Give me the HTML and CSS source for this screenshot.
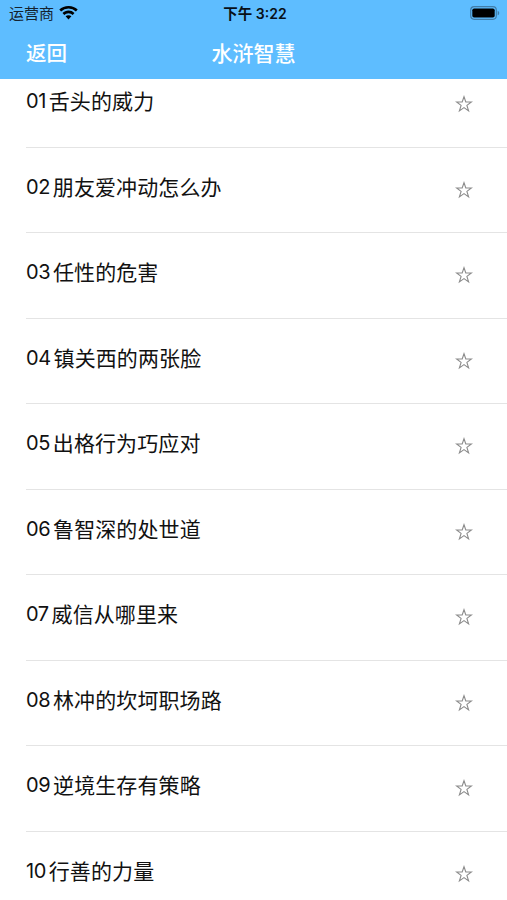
FILE: index.html
```html
<!DOCTYPE html>
<html lang="zh-CN">
<head>
<meta charset="utf-8">
<title>水浒智慧</title>
<link rel="stylesheet" href="styles.css">
</head>
<body>
<svg class="defs" width="0" height="0"><symbol id="star" viewBox="0 0 18 18"><path d="M9 1.700 10.800 7H16.400L11.900 10.400 13.600 15.900 9 12.600 4.400 15.900 6.100 10.400 1.600 7H7.200Z" fill="none" stroke="#8b8b8b" stroke-width="1.100"/></symbol></svg>
<header class="header">
  <div class="status">
    <div class="carrier"><span>运营商</span>
      <svg class="wifi" width="19" height="14" viewBox="0 0 19 14"><path d="M9.500 0C5.900 0 2.700 1.300.3 3.600l1.800 1.900a10.600 10.600 0 0 1 14.800 0l1.800-1.900A13.200 13.200 0 0 0 9.500 0zM9.500 4.600c-2.300 0-4.400.9-6 2.400l1.800 1.900a6 6 0 0 1 8.400 0L15.500 7a8.600 8.600 0 0 0-6-2.400zM9.500 9.200c-1.100 0-2.100.4-2.900 1.100l2.900 3.200 2.900-3.200a4.200 4.200 0 0 0-2.900-1.100z"/></svg>
    </div>
    <div class="time"><span class="period">下午</span> 3:22</div>
    <svg class="battery" width="31" height="14" viewBox="0 0 31 14"><rect x=".7" y=".7" width="25.600" height="12.600" rx="3.500" fill="none" stroke="#417da9" stroke-width="1.200"/><rect x="2.300" y="2.400" width="22.400" height="9.200" rx="1.800"/><path d="M27.700 4.700v4.600c2-.8 2-3.800 0-4.600z" fill="#417da9"/></svg>
  </div>
  <nav class="nav"><span class="back">返回</span><h1 class="title">水浒智慧</h1></nav>
</header>
<ul class="list">
  <li class="row"><span class="num">01</span><span class="name">舌头的威力</span><svg class="star"><use href="#star"/></svg></li>
  <li class="row"><span class="num">02</span><span class="name">朋友爱冲动怎么办</span><svg class="star"><use href="#star"/></svg></li>
  <li class="row"><span class="num">03</span><span class="name">任性的危害</span><svg class="star"><use href="#star"/></svg></li>
  <li class="row"><span class="num">04</span><span class="name">镇关西的两张脸</span><svg class="star"><use href="#star"/></svg></li>
  <li class="row"><span class="num">05</span><span class="name">出格行为巧应对</span><svg class="star"><use href="#star"/></svg></li>
  <li class="row"><span class="num">06</span><span class="name">鲁智深的处世道</span><svg class="star"><use href="#star"/></svg></li>
  <li class="row"><span class="num">07</span><span class="name">威信从哪里来</span><svg class="star"><use href="#star"/></svg></li>
  <li class="row"><span class="num">08</span><span class="name">林冲的坎坷职场路</span><svg class="star"><use href="#star"/></svg></li>
  <li class="row"><span class="num">09</span><span class="name">逆境生存有策略</span><svg class="star"><use href="#star"/></svg></li>
  <li class="row"><span class="num">10</span><span class="name">行善的力量</span><svg class="star"><use href="#star"/></svg></li>
</ul>
</body>
</html>
```
FILE: styles.css
```css
* { box-sizing: border-box; }
body {
  margin: 0;
  height: 900px;
  overflow: hidden;
  display: flex;
  flex-direction: column;
  background: #fff;
  color: #111;
  font-family: Inter, "Noto Sans CJK SC", sans-serif;
}
.defs { position: absolute; }
.header {
  flex: none;
  height: 79px;
  background: #5ebdff;
  z-index: 1;
}
.status {
  height: 27px;
  display: grid;
  grid-template-columns: 1fr auto 1fr;
  align-items: center;
  padding: 0 6px 0 9px;
  line-height: 27px;
}
.carrier {
  display: flex;
  align-items: center;
  gap: 5px;
  font-size: 15px;
  color: #14222e;
}
.wifi { margin-bottom: 1px; }
.time { font-size: 14px; font-weight: 600; color: #081018; }
.period { font-size: 14.5px; }
.battery { justify-self: end; margin-bottom: 1px; }
.nav {
  height: 49px;
  display: grid;
  grid-template-columns: 1fr auto 1fr;
  align-items: center;
  padding: 0 26px;
  color: #fff;
}
.back { font-size: 20.5px; font-weight: 500; }
.title { margin: 0; font-size: 21px; font-weight: 500; }
.list {
  margin: -17px 0 0;
  padding: 0 0 0 26px;
  list-style: none;
}
.row {
  height: 85.5px;
  display: flex;
  align-items: center;
  padding: 0 34px 6px 0;
  border-bottom: 1px solid #e4e4e4;
}
.num { font-size: 20px; letter-spacing: -.4px; }
.name { margin: 0 0 2px 2.8px; font-size: 21px; letter-spacing: .1px; }
.star { width: 18px; height: 18px; margin: 6px 0 0 auto; }
```
